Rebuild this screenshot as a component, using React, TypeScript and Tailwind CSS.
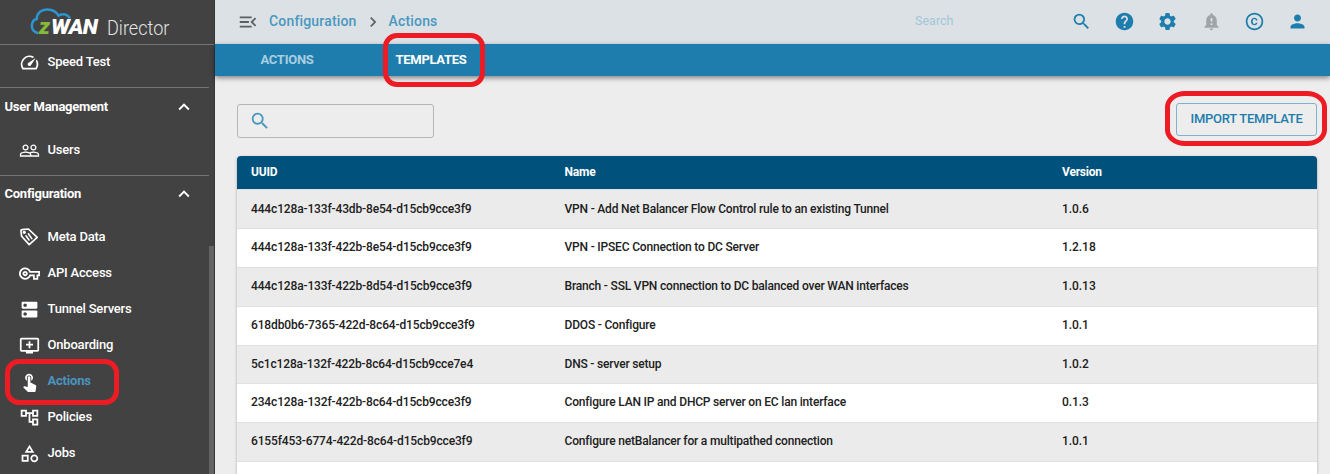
import React from "react";
import {
  MdSpeed, MdPeopleOutline, MdOutlineVpnKey, MdDns, MdAddToQueue, MdTouchApp,
  MdOutlineAccountTree, MdOutlineCategory, MdMenuOpen, MdChevronRight, MdSearch,
  MdHelp, MdSettings, MdNotificationImportant, MdCopyright, MdPerson, MdExpandLess,
} from "react-icons/md";

function TagIcon() {
  return (
    <svg viewBox="0 0 20 20" width="20" height="20" fill="none" stroke="currentColor" strokeWidth="1.7" strokeLinejoin="round" strokeLinecap="round" className="-ml-[2px]">
      <path d="M3.1 2.6 Q2 2.6 2 3.8 L2.6 9.2 L10.2 17.6 L18.2 10.4 L9.4 2 Z" />
      <circle cx="5.3" cy="5.3" r="0.8" fill="currentColor" />
      <path d="M9.4 6.8 L12.8 11.6 M7 8.8 L10 13" strokeWidth="1.6" />
    </svg>
  );
}

function Logo() {
  return (
    <div className="flex h-[45px] shrink-0 items-start border-b border-[#757575] pl-[30px]">
      <div className="relative h-9 w-[140px]">
        <svg className="absolute left-0 top-[6px]" width="44" height="30" viewBox="0 0 44 30" fill="none" stroke="#2b96d2" strokeWidth="2.5" strokeLinecap="butt">
          <path d="M8.5 27.3 C3.5 26.2 1.6 22.8 1.9 19.2 C2.2 15.6 4.4 13.4 6.8 13 C6.6 7.6 11 3.4 17.5 3.4 C22.5 3.5 26.5 5.8 28.6 9.6 C33 7.2 37.5 8.2 40 12.4" />
        </svg>
        <span className="absolute left-[9px] top-[15px] text-[22px] font-black italic leading-[24px] text-[#86b83a]">z</span>
        <span className="absolute left-[21px] top-[15px] origin-left scale-x-[1.06] text-[21px] font-black italic leading-[24px] tracking-[-0.6px] text-white">WAN</span>
        <span className="absolute left-[77px] top-[16px] origin-left scale-x-[0.905] text-[20px] font-light leading-[24px] text-[#e4e4e4]">Director</span>
      </div>
    </div>
  );
}

type ItemProps = { icon: React.ReactNode; label: string; active?: boolean };
function Item({ icon, label, active }: ItemProps) {
  return (
    <div className="flex h-9 shrink-0 items-center pl-[19px] text-[13px] font-medium tracking-[-0.2px] text-white">
      <span className="flex w-[21px] justify-center text-[21px]">{icon}</span>
      <span className={active ? "pl-[7.5px] font-bold text-[#4a94c0]" : "pl-[7.5px]"}>{label}</span>
    </div>
  );
}

function Section({ label, pad }: { label: string; pad: string }) {
  return (
    <div className={`mr-[5px] flex h-10 shrink-0 items-center justify-between border-t border-[#757575] pl-[4.5px] pr-[14px] text-[13px] font-bold tracking-[-0.25px] text-white ${pad}`}>
      <span>{label}</span>
      <MdExpandLess className="size-[22px]" />
    </div>
  );
}

function Sidebar() {
  return (
    <aside className="relative flex w-[215px] shrink-0 flex-col overflow-hidden border-r border-[#363636] bg-[#424242]">
      <Logo />
      <div className="-mt-px flex shrink-0 flex-col pb-[7px]">
        <Item icon={<MdSpeed />} label="Speed Test" />
      </div>
      <Section label="User Management" pad="pb-[2px]" />
      <div className="flex shrink-0 flex-col pb-[7px] pt-[5px]">
        <Item icon={<MdPeopleOutline />} label="Users" />
      </div>
      <Section label="Configuration" pad="pb-[4px]" />
      <div className="flex shrink-0 flex-col pt-1">
        <Item icon={<TagIcon />} label="Meta Data" />
        <Item icon={<MdOutlineVpnKey />} label="API Access" />
        <Item icon={<MdDns />} label="Tunnel Servers" />
        <Item icon={<MdAddToQueue />} label="Onboarding" />
        <Item icon={<MdTouchApp />} label="Actions" active />
        <Item icon={<MdOutlineAccountTree />} label="Policies" />
        <Item icon={<MdOutlineCategory />} label="Jobs" />
      </div>
      <div className="absolute right-0 top-[246px] h-[228px] w-[5px] bg-[#646464]" />
    </aside>
  );
}

const rows = [
  { id: "444c128a-133f-43db-8e54-d15cb9cce3f9", name: "VPN - Add Net Balancer Flow Control rule to an existing Tunnel", version: "1.0.6", height: "h-10 border-t border-t-[#e0e0e0]" },
  { id: "444c128a-133f-422b-8e54-d15cb9cce3f9", name: "VPN - IPSEC Connection to DC Server", version: "1.2.18", height: "h-[39px] pb-[2px]" },
  { id: "444c128a-133f-422b-8d54-d15cb9cce3f9", name: "Branch - SSL VPN connection to DC balanced over WAN interfaces", version: "1.0.13", height: "h-[39px] pb-[2px]" },
  { id: "618db0b6-7365-422d-8c64-d15cb9cce3f9", name: "DDOS - Configure", version: "1.0.1", height: "h-[39px] pb-[2px]" },
  { id: "5c1c128a-132f-422b-8c64-d15cb9cce7e4", name: "DNS - server setup", version: "1.0.2", height: "h-[38px] pb-px" },
  { id: "234c128a-132f-422b-8c64-d15cb9cce3f9", name: "Configure LAN IP and DHCP server on EC lan interface", version: "0.1.3", height: "h-[39px] pb-[2px]" },
  { id: "6155f453-6774-422d-8c64-d15cb9cce3f9", name: "Configure netBalancer for a multipathed connection", version: "1.0.1", height: "h-[39px] pb-[2px]" },
];

function TemplateTable() {
  return (
    <div className="ml-[22px] mr-[13px] mt-[18px] flex flex-1 flex-col overflow-hidden rounded-t-[4px] bg-white text-[12px] font-medium text-[#212121] shadow-[0_1px_3px_rgba(0,0,0,0.3)]">
      <div className="flex h-[33px] shrink-0 items-center bg-[#00527d] pb-[2px] pl-[14px] font-bold tracking-[-0.2px] text-white">
        <span className="w-[313.5px]">UUID</span>
        <span className="w-[497.5px]">Name</span>
        <span>Version</span>
      </div>
      {rows.map((r, i) => (
        <div key={r.id} className={`flex shrink-0 items-center border-b border-[#e0e0e0] pl-[14px] ${r.height} ${i % 2 === 0 ? "bg-[#ebebeb]" : "bg-white"}`}>
          <span className="w-[313.5px] tracking-[-0.145px]">{r.id}</span>
          <span className="w-[497.5px] tracking-[-0.185px]">{r.name}</span>
          <span className="tracking-[-0.05px]">{r.version}</span>
        </div>
      ))}
    </div>
  );
}

export default function App() {
  return (
    <div className="relative flex h-[474px] w-[1330px] overflow-hidden bg-[#ededed] font-['Roboto',sans-serif]">
      <Sidebar />
      <main className="flex min-w-0 flex-1 flex-col">
        <header className="flex h-11 shrink-0 items-center bg-[#dce1e5] pb-px pl-[22px] pr-[22px] text-[#1d7dac]">
          <MdMenuOpen className="size-[22px] text-[#5c6063]" />
          <span className="ml-[10px] text-[14px] font-medium tracking-[0.17px] text-[#4a98c0]">Configuration</span>
          <MdChevronRight className="mx-[6px] size-5 text-[#5c6063]" />
          <span className="text-[14px] font-medium tracking-[0.17px] text-[#4a98c0]">Actions</span>
          <span className="ml-auto w-[156px] text-[12.5px] text-[#a2c5d8]">Search</span>
          <div className="flex gap-[22.2px] text-[21px]">
            <MdSearch /><MdHelp /><MdSettings />
            <MdNotificationImportant className="text-[#a0a4a6]" />
            <MdCopyright /><MdPerson />
          </div>
        </header>
        <nav className="z-10 flex h-8 shrink-0 items-center bg-[#1e7dad] text-[13px] font-bold text-white shadow-[0_2px_5px_rgba(0,0,0,0.45)]">
          <span className="w-36 text-center tracking-[-0.25px] text-[#a9cfe2]">ACTIONS</span>
          <span className="w-36 text-center tracking-[-0.3px]">TEMPLATES</span>
        </nav>
        <div className="flex shrink-0 items-start justify-between pl-[22px] pr-[13px] pt-[27px]">
          <div className="mt-px flex h-[34px] w-[197px] items-center rounded-[3px] border border-[#b5b5b5] pb-px pl-[11px]">
            <MdSearch className="size-[22px] text-[#4a98c0]" />
          </div>
          <button className="h-[33px] w-[141px] rounded-[3px] border border-[#7fb2cf] pb-[2px] text-[13px] font-medium tracking-[-0.25px] text-[#1d7dac]">IMPORT TEMPLATE</button>
        </div>
        <TemplateTable />
      </main>
      <div className="absolute left-[5px] top-[359px] z-20 h-[46px] w-[114px] rounded-[14px] border-[5px] border-[#ed1c24]" />
      <div className="absolute left-[383px] top-[33px] z-20 h-[54px] w-[102px] rounded-[14px] border-[5px] border-[#ed1c24]" />
      <div className="absolute left-[1165px] top-[91px] z-20 h-[55px] w-[162px] rounded-[20px/16px] border-[5px] border-[#ed1c24]" />
    </div>
  );
}
